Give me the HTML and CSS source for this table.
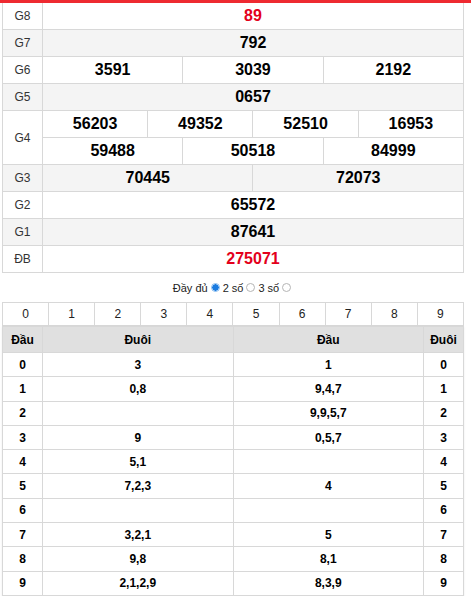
FILE: index.html
```html
<!DOCTYPE html>
<html lang="vi">
<head>
<meta charset="utf-8">
<title>Kết quả</title>
<link rel="stylesheet" href="styles.css">
</head>
<body>
<div class="topbar"></div>
<div class="wrap">
  <table class="kq">
    <colgroup><col class="c-lbl"><col span="12"></colgroup>
    <tr class="odd"><td class="lbl">G8</td><td colspan="12" class="red">89</td></tr>
    <tr class="even"><td class="lbl">G7</td><td colspan="12">792</td></tr>
    <tr class="odd"><td class="lbl">G6</td><td colspan="4">3591</td><td colspan="4">3039</td><td colspan="4">2192</td></tr>
    <tr class="even"><td class="lbl">G5</td><td colspan="12">0657</td></tr>
    <tr class="odd"><td class="lbl" rowspan="2">G4</td><td colspan="3">56203</td><td colspan="3">49352</td><td colspan="3">52510</td><td colspan="3">16953</td></tr>
    <tr class="odd"><td colspan="4">59488</td><td colspan="4">50518</td><td colspan="4">84999</td></tr>
    <tr class="even"><td class="lbl">G3</td><td colspan="6">70445</td><td colspan="6">72073</td></tr>
    <tr class="odd"><td class="lbl">G2</td><td colspan="12">65572</td></tr>
    <tr class="even"><td class="lbl">G1</td><td colspan="12">87641</td></tr>
    <tr class="odd"><td class="lbl">ĐB</td><td colspan="12" class="red">275071</td></tr>
  </table>

  <div class="mode">
    <span>Đầy đủ</span><span class="radio on"></span><span>2 số</span><span class="radio"></span><span>3 số</span><span class="radio"></span>
  </div>

  <table class="digits">
    <tr><td>0</td><td>1</td><td>2</td><td>3</td><td>4</td><td>5</td><td>6</td><td>7</td><td>8</td><td>9</td></tr>
  </table>

  <table class="loto">
    <colgroup><col class="c-dau"><col><col><col class="c-dau"></colgroup>
    <thead>
      <tr><th>Đầu</th><th>Đuôi</th><th>Đầu</th><th>Đuôi</th></tr>
    </thead>
    <tbody>
      <tr><td>0</td><td>3</td><td>1</td><td>0</td></tr>
      <tr><td>1</td><td>0,8</td><td>9,4,7</td><td>1</td></tr>
      <tr><td>2</td><td></td><td>9,9,5,7</td><td>2</td></tr>
      <tr><td>3</td><td>9</td><td>0,5,7</td><td>3</td></tr>
      <tr><td>4</td><td>5,1</td><td></td><td>4</td></tr>
      <tr><td>5</td><td>7,2,3</td><td>4</td><td>5</td></tr>
      <tr><td>6</td><td></td><td></td><td>6</td></tr>
      <tr><td>7</td><td>3,2,1</td><td>5</td><td>7</td></tr>
      <tr><td>8</td><td>9,8</td><td>8,1</td><td>8</td></tr>
      <tr><td>9</td><td>2,1,2,9</td><td>8,3,9</td><td>9</td></tr>
    </tbody>
  </table>
</div>
</body>
</html>
```

FILE: styles.css
```css
html, body {
  margin: 0;
  padding: 0;
  background: #fff;
  font-family: "Liberation Sans", Arial, sans-serif;
  color: #000;
}

.topbar {
  height: 3px;
  background: #ee2a31;
}

.wrap {
  margin-left: 2px;
  width: 462px;
}

table {
  border-collapse: collapse;
  width: 462px;
  table-layout: fixed;
}

td, th {
  padding: 0;
  text-align: center;
  border: 1px solid #d8d8d8;
}

/* results table */
.kq {
  border-top: hidden;
}

.kq .c-lbl {
  width: 40px;
}

.kq td {
  height: 26px;
  font-size: 16px;
  font-weight: bold;
  line-height: 26px;
}

.kq td.lbl {
  font-size: 12px;
  font-weight: normal;
  color: #333;
}

.kq tr.even td {
  background: #f4f4f4;
}

.kq td.red {
  color: #e3001b;
}

/* mode switch */
.mode {
  height: 29px;
  display: flex;
  align-items: center;
  justify-content: center;
  gap: 1px;
  font-size: 11px;
  color: #222;
}

.radio {
  display: inline-block;
  box-sizing: border-box;
  width: 9px;
  height: 9px;
  border-radius: 50%;
  border: 1px solid #b5b5b5;
  background: #fff;
  margin: 0 2px;
}

.radio.on {
  border: 1px solid #7fb8f0;
  background: radial-gradient(circle, #1a7be0 0 3px, #fff 3.5px);
}

/* digits */
.digits td {
  height: 22px;
  line-height: 22px;
  font-size: 12px;
  color: #222;
}

/* loto table */
.loto .c-dau {
  width: 40px;
}

.loto {
  box-shadow: 0 1px 2px rgba(0, 0, 0, 0.08);
}

.loto th {
  height: 25px;
  background: #e0e0e0;
  font-size: 12px;
  font-weight: bold;
}

.loto td {
  height: 23.3px;
  font-size: 12px;
  font-weight: bold;
}
```
